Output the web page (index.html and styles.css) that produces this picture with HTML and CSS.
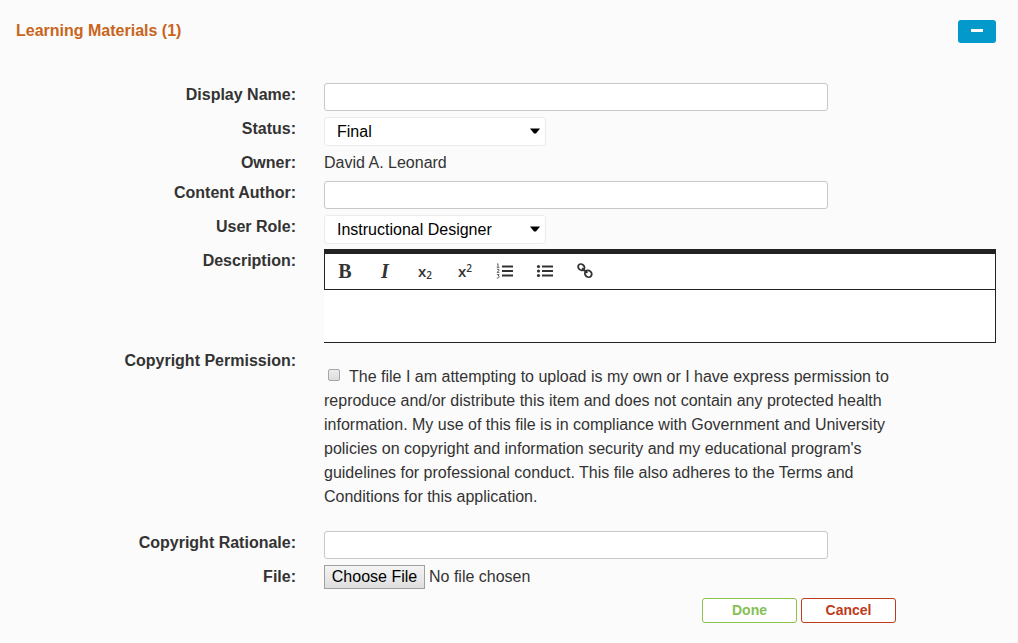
FILE: index.html
```html
<!DOCTYPE html>
<html lang="en">
<head>
<meta charset="utf-8">
<title>Learning Materials</title>
<link rel="stylesheet" href="styles.css">
</head>
<body>
<header class="header">
  <h1 class="title">Learning Materials (1)</h1>
  <button class="collapse" type="button" aria-label="Collapse"><span class="minus"></span></button>
</header>
<form class="form">
  <div class="row"><label class="label">Display Name:</label><input class="input" type="text"></div>
  <div class="row"><label class="label">Status:</label>
    <div class="select"><span>Final</span><svg class="caret" viewBox="0 0 10 6"><path d="M0 .5h10L6 5.500H4z"/></svg></div></div>
  <div class="row row-short"><label class="label">Owner:</label><span class="value">David A. Leonard</span></div>
  <div class="row"><label class="label">Content Author:</label><input class="input" type="text"></div>
  <div class="row"><label class="label">User Role:</label>
    <div class="select"><span>Instructional Designer</span><svg class="caret" viewBox="0 0 10 6"><path d="M0 .5h10L6 5.500H4z"/></svg></div></div>
  <div class="row row-editor"><label class="label">Description:</label>
    <div class="editor">
      <div class="toolbar">
        <span class="tool bold">B</span>
        <span class="tool italic">I</span>
        <span class="tool script">x<small class="lower">2</small></span>
        <span class="tool script">x<small class="upper">2</small></span>
        <span class="tool"><svg class="icon" viewBox="0 0 18 16"><path class="bar" d="M6 3.500h11M6 8h11M6 12.500h11"/><path class="digit" d="M1 1.300l1-.6v3.600M.8 4.300h2.600M.9 6.300h2v1.500l-2 1.600h2.500M.9 11.500h2.200l-1 1.500c1.600 0 1.400 2.300-1.300 2"/></svg></span>
        <span class="tool"><svg class="icon" viewBox="0 0 18 16"><path class="bar" d="M6 3.500h11M6 8h11M6 12.500h11"/><circle cx="2.500" cy="3.500" r="1.600"/><circle cx="2.500" cy="8" r="1.600"/><circle cx="2.500" cy="12.500" r="1.600"/></svg></span>
        <span class="tool"><svg class="icon" viewBox="0 0 18 16"><g class="chain"><ellipse cx="5.300" cy="4.200" rx="3.400" ry="2.900" transform="rotate(40 5.300 4.200)"/><ellipse cx="12.300" cy="10.800" rx="3.600" ry="3.200" transform="rotate(40 12.300 10.800)"/><path d="M6.200 5.200l2.600 3M9 7.500l2.400 2.400"/></g></svg></span>
      </div>
      <div class="textarea"></div>
    </div></div>
  <div class="row row-permission"><label class="label">Copyright Permission:</label>
    <p class="permission"><span class="checkbox"></span>The file I am attempting to upload is my own or I have express permission to<br>reproduce and/or distribute this item and does not contain any protected health<br>information. My use of this file is in compliance with Government and University<br>policies on copyright and information security and my educational program's<br>guidelines for professional conduct. This file also adheres to the Terms and<br>Conditions for this application.</p></div>
  <div class="row"><label class="label">Copyright Rationale:</label><input class="input" type="text"></div>
  <div class="row"><label class="label">File:</label>
    <div class="file"><button class="choose" type="button">Choose File</button><span>No file chosen</span></div></div>
  <div class="actions"><button class="btn done" type="button">Done</button><button class="btn cancel" type="button">Cancel</button></div>
</form>
</body>
</html>
```
FILE: styles.css
```css
* { box-sizing: border-box; }
body {
  margin: 0;
  background: #fbfbfb;
  color: #333;
  font: 16px/24px "Liberation Sans", Arial, sans-serif;
}
button { font-family: inherit; padding: 0; }
.header {
  display: flex;
  justify-content: space-between;
  align-items: flex-start;
  height: 82px;
  padding: 19px 22px 0 16px;
}
.title { margin: 0; font-size: 16px; line-height: 24px; color: #c8651b; }
.collapse {
  display: flex;
  justify-content: center;
  width: 38px;
  height: 23px;
  margin-top: 1px;
  padding-top: 9px;
  border: 0;
  border-radius: 3px;
  background: #0399cb;
}
.minus { width: 12px; height: 3px; background: #fff; }
.row {
  display: grid;
  grid-template-columns: 296px 672px;
  column-gap: 28px;
  align-items: start;
  height: 34px;
}
.row-short { height: 30px; }
.row-editor { height: 100px; }
.row-permission { height: 182px; }
.label { margin-top: 1px; text-align: right; font-weight: bold; }
.value { margin-top: 1px; }
.input {
  width: 504px;
  height: 28px;
  margin: 1px 0 0;
  border: 1px solid #c8c8c8;
  border-radius: 3px;
  background: #fff;
}
.select {
  display: flex;
  align-items: center;
  justify-content: space-between;
  width: 222px;
  height: 29px;
  margin-top: 1px;
  padding: 0 5px 0 12px;
  border: 1px solid #ebebeb;
  border-radius: 3px;
  background: #fff;
  color: #000;
}
.caret { width: 10px; height: 6px; margin-bottom: 1px; }
.editor {
  height: 94px;
  margin-top: 1px;
  border-top: 5px solid #222;
  border-right: 1px solid #222;
  border-bottom: 1px solid #222;
  background: #fff;
}
.toolbar {
  display: flex;
  height: 36px;
  border-left: 1px solid #222;
  border-bottom: 1px solid #222;
}
.tool {
  display: flex;
  align-items: center;
  justify-content: center;
  width: 40px;
  height: 34px;
}
.bold { font: bold 20px "Liberation Serif", serif; }
.italic { font: italic bold 20px "Liberation Serif", serif; }
.script { font: 600 15px/20px "Open Sans", sans-serif; }
.script small { font-size: 10px; line-height: 10px; }
.lower { margin-top: 8px; }
.upper { margin-bottom: 7px; }
.icon { width: 18px; height: 16px; fill: #333; }
.bar { stroke: #333; stroke-width: 2; }
.digit { fill: none; stroke: #555; stroke-width: .9; }
.chain { fill: none; stroke: #333; stroke-width: 1.8; }
.permission { margin: 17px 0 0; white-space: nowrap; }
.checkbox {
  display: inline-block;
  width: 12px;
  height: 12px;
  margin: 0 9px 0 4px;
  border: 1px solid #a5a5a5;
  border-radius: 2px;
  background: linear-gradient(#ededed, #dcdcdc);
  vertical-align: 1px;
}
.file { display: flex; gap: 4px; margin-top: 1px; }
.choose {
  width: 101px;
  height: 24px;
  border: 1px solid #a0a0a0;
  background: linear-gradient(#f4f4f4, #dedede);
  color: #000;
  font-size: 16px;
  line-height: 22px;
}
.actions { display: flex; gap: 4px; padding-left: 702px; }
.btn {
  width: 95px;
  height: 25px;
  padding-bottom: 2px;
  border: 1px solid;
  border-radius: 3px;
  background: #fff;
  font-size: 14px;
  font-weight: bold;
}
.done { border-color: #8bc34a; color: #85c057; }
.cancel { border-color: #bd3b1b; color: #bd3b1b; }
```
